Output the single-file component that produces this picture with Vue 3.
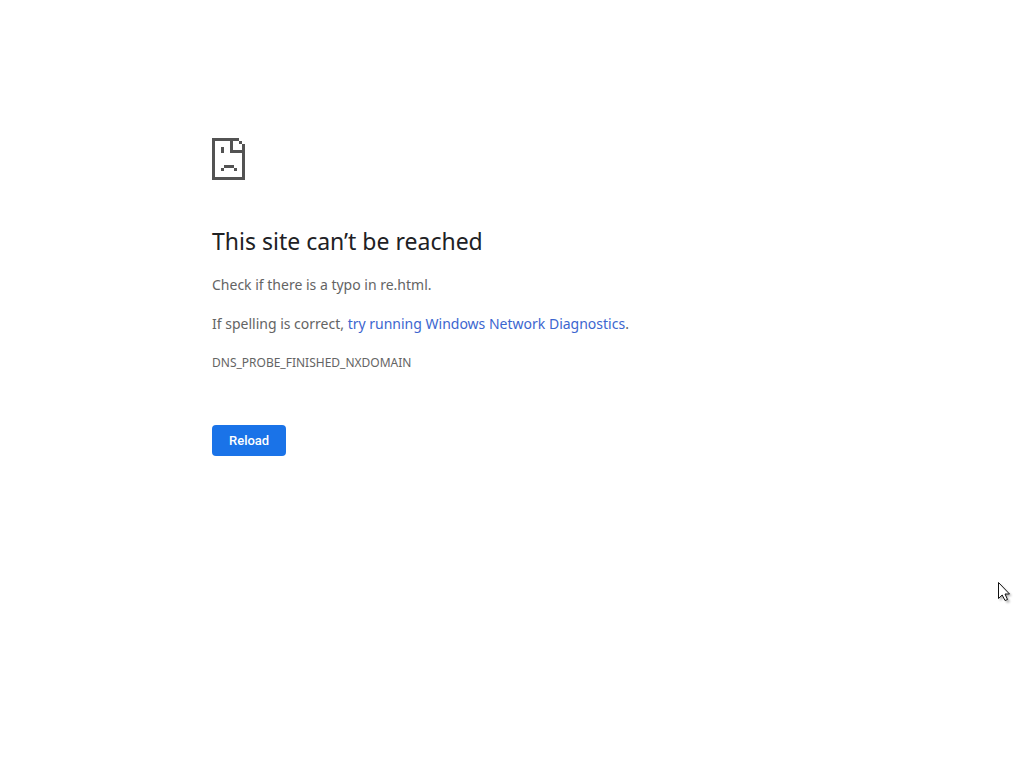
<script setup>
const reload = () => window.location.reload()
</script>

<template>
  <main class="error-page">
    <svg class="page-icon" viewBox="0 0 33 42" shape-rendering="crispEdges" aria-hidden="true">
      <path d="M0 0H27V3H21V12H33V42H0ZM3 3V39H30V15H18V3Z" fill-rule="evenodd" />
      <path d="M27 3H30V6H27ZM30 6H33V12H30ZM9 9H12V15H9ZM12 27H22V30H12ZM9 30H12V33H9ZM22 30H25V33H22Z" />
    </svg>
    <h1>This site can’t be reached</h1>
    <p>Check if there is a typo in re.html.</p>
    <p>If spelling is correct, <a href="#">try running Windows Network Diagnostics</a>.</p>
    <div class="code">DNS_PROBE_FINISHED_NXDOMAIN</div>
    <button type="button" @click="reload">Reload</button>
    <svg class="cursor" viewBox="0 0 18 24" aria-hidden="true">
      <path class="shadow" d="M3 3V20L7 16L10 22L13 21L10 15H15Z" />
      <path class="pointer" d="M1.5 1.5V17.5L5.2 14L8 19.5L10.5 18.5L8 13H12.5Z" />
    </svg>
  </main>
</template>

<style>
body {
  background: #fff;
}
</style>

<style scoped>
.error-page {
  box-sizing: border-box;
  max-width: 600px;
  margin: 0 auto;
  padding-top: 138px;
  color: #646464;
  font-family: Tahoma, "Noto Sans", sans-serif;
  font-size: 14px;
  line-height: 24px;
}
.page-icon {
  display: block;
  width: 33px;
  height: 42px;
  margin-bottom: 45px;
  fill: #535353;
}
h1 {
  margin: 0 0 16px;
  color: #202124;
  font-size: 23px;
  font-weight: 400;
  line-height: 32px;
}
p {
  margin: 0 0 15px;
}
a {
  color: #3c66cf;
  text-decoration: none;
}
.code {
  font-size: 12px;
}
button {
  display: block;
  margin-top: 50px;
  padding: 8px 17px;
  border: 0;
  border-radius: 4px;
  background: #1a73e8;
  color: #fff;
  font-family: Roboto, sans-serif;
  font-size: 13px;
  font-weight: 500;
  line-height: 15px;
}
.cursor {
  position: absolute;
  top: 581px;
  right: 9px;
  width: 18px;
  height: 24px;
}
.shadow {
  fill: #000;
  opacity: 0.3;
  filter: blur(1px);
}
.pointer {
  fill: #fff;
  stroke: #111;
  stroke-width: 1;
}
</style>
